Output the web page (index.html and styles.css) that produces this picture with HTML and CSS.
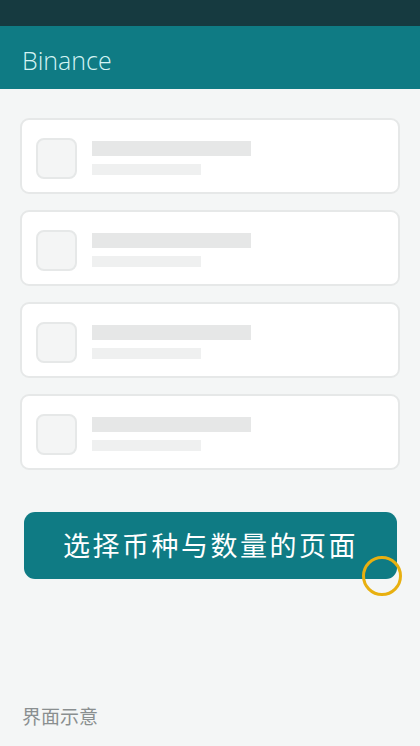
FILE: index.html
```html
<!DOCTYPE html>
<html lang="zh">
<head>
    <meta charset="UTF-8">
    <meta name="viewport" content="width=device-width, initial-scale=1.0">
    <title>Binance</title>
    <link rel="stylesheet" href="styles.css">
</head>
<body>
    <div class="status-bar"></div>
    <header class="app-bar">
        <h1>Binance</h1>
    </header>

    <main class="content">
        <div class="list">
            <div class="card">
                <div class="thumb"></div>
                <div class="lines">
                    <div class="line-main"></div>
                    <div class="line-sub"></div>
                </div>
            </div>
            <div class="card">
                <div class="thumb"></div>
                <div class="lines">
                    <div class="line-main"></div>
                    <div class="line-sub"></div>
                </div>
            </div>
            <div class="card">
                <div class="thumb"></div>
                <div class="lines">
                    <div class="line-main"></div>
                    <div class="line-sub"></div>
                </div>
            </div>
            <div class="card">
                <div class="thumb"></div>
                <div class="lines">
                    <div class="line-main"></div>
                    <div class="line-sub"></div>
                </div>
            </div>
        </div>

        <div class="action">
            <button class="main-btn">选择币种与数量的页面</button>
            <!-- tap indicator -->
            <span class="touch-ring"></span>
        </div>
    </main>

    <footer class="caption">界面示意</footer>
</body>
</html>
```

FILE: styles.css
```css
body {
    margin: 0;
    padding: 0;
    font-family: 'Noto Sans', 'Noto Sans CJK SC', sans-serif;
    background-color: #f4f6f6;
    height: 746px;
    display: flex;
    flex-direction: column;
    overflow: hidden;
}
.status-bar {
    height: 26px;
    background-color: #163a40;
}
.app-bar {
    height: 63px;
    background-color: #0f7b84;
    display: flex;
    align-items: center;
    padding: 0 22px;
}
.app-bar h1 {
    margin: 0;
    color: #d4f4f4;
    font-family: 'Open Sans', sans-serif;
    font-weight: 300;
    font-size: 25px;
    padding-top: 4px;
}
.content {
    flex: 1;
    padding: 29px 20px 0;
}
.list {
    display: flex;
    flex-direction: column;
    gap: 16px;
}
.card {
    height: 68px;
    background-color: #fff;
    border: 2px solid #e6e8e8;
    border-radius: 9px;
    display: flex;
    align-items: center;
    padding: 4px 14px 0;
}
.thumb {
    width: 37px;
    height: 37px;
    border: 2px solid #e6e8e8;
    border-radius: 8px;
    background-color: #f4f5f5;
    flex-shrink: 0;
}
.lines {
    margin-left: 15px;
    display: flex;
    flex-direction: column;
    gap: 8px;
}
.line-main {
    width: 159px;
    height: 15px;
    background-color: #e6e7e7;
}
.line-sub {
    width: 109px;
    height: 11px;
    background-color: #eff0f0;
}
.action {
    position: relative;
    margin: 42px 3px 0 4px;
}
.main-btn {
    display: block;
    width: 100%;
    height: 67px;
    border: none;
    border-radius: 11px;
    background-color: #0f7b84;
    color: #fff;
    font-family: 'Noto Sans CJK SC', sans-serif;
    font-size: 27px;
    letter-spacing: 2.5px;
    padding: 0 0 3px 0;
}
.touch-ring {
    position: absolute;
    right: -5px;
    top: 44px;
    width: 34px;
    height: 34px;
    border: 3px solid #e8b010;
    border-radius: 50%;
}
.caption {
    padding: 0 22px 17px;
    color: #8a8f90;
    font-family: 'Noto Sans CJK SC', sans-serif;
    font-size: 19px;
}
```
